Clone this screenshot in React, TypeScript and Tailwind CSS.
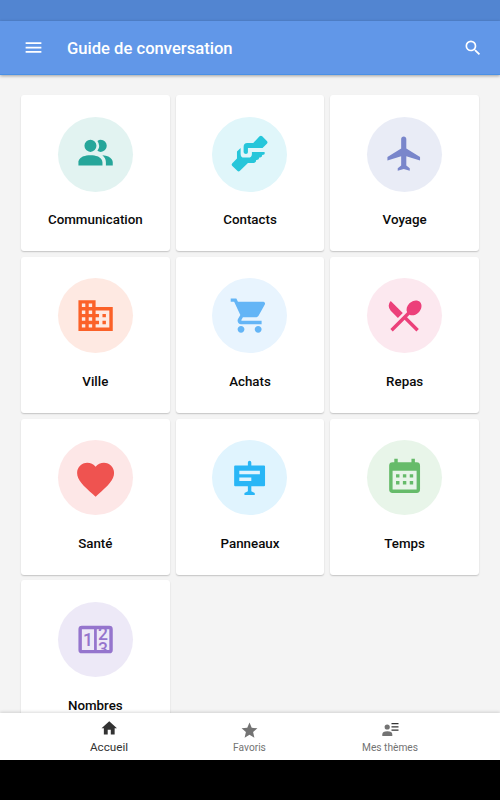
import React from 'react';
import {
  MdBusiness,
  MdFavorite,
  MdHome,
  MdMenu,
  MdRestaurantMenu,
  MdSearch,
  MdShoppingCart,
  MdStar,
} from 'react-icons/md';

const PeopleIcon = () => (
  <svg viewBox="0 0 24 24" fill="currentColor" className="size-full">
    <path d="M16 17v2H2v-2s0-4 7-4 7 4 7 4m-3.500-9.500A3.500 3.500 0 1 0 9 11a3.500 3.500 0 0 0 3.500-3.500m3.440 5.500A5.320 5.320 0 0 1 18 17v2h4v-2s0-3.630-6.060-4M15 4a3.390 3.390 0 0 0-1.930.590 5 5 0 0 1 0 5.820A3.390 3.390 0 0 0 15 11a3.500 3.500 0 0 0 0-7z" />
  </svg>
);

const HandsIcon = () => (
  <svg viewBox="0 0 124 124" fill="currentColor" className="size-full">
    <path d="M92 10q4-4 8 0l14 14q4 4 0 8l-13 13H57v13q0 5-6 5t-7-5V42q0-12 11-12h18z" />
    <path d="M35 45v18q0 11 10 11h13q11 0 11-11v-6h36q3 0 3 3 0 6-8 6 0 7-6 8h-3q0 7-7 7h-2q0 9-8 9H57L33 114q-4 4-8 0L10 99q-4-4 0-8l14-14V56z" />
  </svg>
);

const PlaneIcon = () => (
  <svg viewBox="0 0 24 24" fill="currentColor" className="size-full">
    <path d="M21 16v-2l-8-5V3.500c0-.83-.67-1.500-1.500-1.500S10 2.670 10 3.500V9l-8 5v2l8-2.500V19l-2 1.500V22l3.500-1 3.500 1v-1.500L13 19v-5.500l8 2.500z" />
  </svg>
);

const HeartIcon = () => (
  <MdFavorite className="size-[44.400px] -translate-x-[1.600px] translate-y-[0.300px]" />
);

const SignIcon = () => (
  <svg viewBox="0 0 24 24" fill="currentColor" className="size-full">
    <path
      fillRule="evenodd"
      d="M11 5V3.200a1 1 0 0 1 2 0V5h7.400a.6.6 0 0 1 .6.6v10.800a.6.6 0 0 1-.6.6H13v3l2 1v1.200H9V21l2-1v-3H3.600a.6.6 0 0 1-.6-.6V5.600a.6.6 0 0 1 .6-.6zM6 8v2h12V8zM6 12v2h7v-2z"
    />
  </svg>
);

const CalendarIcon = () => (
  <svg viewBox="0 0 24 24" fill="currentColor" className="size-full">
    <path d="M19 3h-1V1h-2v2H8V1H6v2H5a2 2 0 0 0-2 2v14a2 2 0 0 0 2 2h14a2 2 0 0 0 2-2V5a2 2 0 0 0-2-2zm0 16H5V8h14z" />
    <path d="M7 10h2v2H7zM11 10h2v2h-2zM15 10h2v2h-2zM7 14h2v2H7zM11 14h2v2h-2zM15 14h2v2h-2z" />
  </svg>
);

const NumbersIcon = () => (
  <svg viewBox="0 0 24 24" fill="currentColor" className="size-full">
    <defs>
      <clipPath id="counter">
        <path d="M12.700 5.800H20v12.500h-7.300z" />
      </clipPath>
    </defs>
    <path fillRule="evenodd" d="M4 4h16a2 2 0 0 1 2 2v12a2 2 0 0 1-2 2H4a2 2 0 0 1-2-2V6a2 2 0 0 1 2-2zM4 6v12h7.100V6zM12.700 6v12H20V6z" />
    <g fontFamily="Roboto, sans-serif" fontSize="10.200" fontWeight="500" textAnchor="middle">
      <text x="7.600" y="16">1</text>
      <g clipPath="url(#counter)">
        <text x="16.300" y="12.400">2</text>
        <text x="16.300" y="20.900">3</text>
      </g>
    </g>
  </svg>
);

const ThemesIcon = () => (
  <svg viewBox="0 0 17 16" fill="currentColor" className="h-4 w-[17px]">
    <circle cx="5.200" cy="6" r="2.600" />
    <path d="M.3 15v-1.500q0-3.300 5-3.300t5 3.300V15z" />
    <path fill="#333" d="M9.500 2h7v1.200h-7zM9.500 5.200h7v1.200h-7zM9.500 8.600h7v1.200h-7z" />
  </svg>
);

const topics = [
  { name: 'Communication', icon: PeopleIcon, color: 'bg-[#e2f3f1] text-[#26a69a]' },
  { name: 'Contacts', icon: HandsIcon, color: 'bg-[#e0f6fa] text-[#26c6da]' },
  { name: 'Voyage', icon: PlaneIcon, color: 'bg-[#e9ecf6] text-[#7986cb]' },
  { name: 'Ville', icon: MdBusiness, color: 'bg-[#fee9e2] text-[#fb6128]' },
  { name: 'Achats', icon: MdShoppingCart, color: 'bg-[#e8f4fe] text-[#64b5f6]' },
  { name: 'Repas', icon: MdRestaurantMenu, color: 'bg-[#fce8ef] text-[#ec407a]' },
  { name: 'Santé', icon: HeartIcon, color: 'bg-[#fde7e7] text-[#ef5350]' },
  { name: 'Panneaux', icon: SignIcon, color: 'bg-[#e0f4fe] text-[#29b6f6]' },
  { name: 'Temps', icon: CalendarIcon, color: 'bg-[#e8f5e9] text-[#66bb6a]' },
  { name: 'Nombres', icon: NumbersIcon, color: 'bg-[#ede9f7] text-[#9575cd]' },
];

const App = () => {
  return (
    <div className="flex h-[800px] w-[500px] flex-col overflow-hidden bg-[#f4f4f4] font-['Roboto',sans-serif]">
      <div className="h-[21px] shrink-0 bg-[#5285d1]" />
      <header className="z-10 flex h-[54px] shrink-0 items-center border-b border-[#4a90e6] bg-[#6197e8] pr-[17px] pl-[23px] text-white shadow-[0_1px_3px_rgba(0,0,0,0.35)]">
        <MdMenu className="size-[21px]" />
        <h1 className="ml-[23px] flex-1 pt-[3px] text-[16.600px] font-medium">Guide de conversation</h1>
        <MdSearch className="size-5" />
      </header>

      <main className="min-h-0 flex-1 overflow-hidden pt-5 pr-[21px] pl-[21px]">
        <div className="grid grid-cols-3 gap-x-[6px] gap-y-[5.800px]">
          {topics.map(({ name, icon: Icon, color }) => (
            <div
              key={name}
              className="flex h-[156px] flex-col items-center rounded-[3px] bg-white pt-[21.500px] shadow-[0_1px_1.500px_rgba(0,0,0,0.2)]"
            >
              <div className={`flex size-[75px] items-center justify-center rounded-full ${color}`}>
                <div className="size-[41.200px]">
                  <Icon className="size-full" />
                </div>
              </div>
              <span className="mt-[18.700px] text-[13.350px] leading-5 font-medium text-[#0a0a0a]">{name}</span>
            </div>
          ))}
        </div>
      </main>

      <nav className="z-10 flex h-[47px] shrink-0 justify-center bg-white pr-px text-[#737373] shadow-[0_-1px_3px_rgba(0,0,0,0.15)]">
        <div className="flex w-[140.500px] flex-col items-center pt-[6px] text-[#333]">
          <MdHome className="size-[18.500px]" />
          <span className="mt-[1.500px] text-[11.700px] leading-4">Accueil</span>
        </div>
        <div className="flex w-[140.500px] flex-col items-center pt-[7.500px]">
          <MdStar className="size-[19px]" />
          <span className="mt-[0.800px] text-[10.200px] leading-4">Favoris</span>
        </div>
        <div className="flex w-[140.500px] flex-col items-center pt-2">
          <ThemesIcon />
          <span className="mt-[3.300px] text-[10.200px] leading-4">Mes thèmes</span>
        </div>
      </nav>
      <div className="h-10 shrink-0 bg-black" />
    </div>
  );
};

export default App;
